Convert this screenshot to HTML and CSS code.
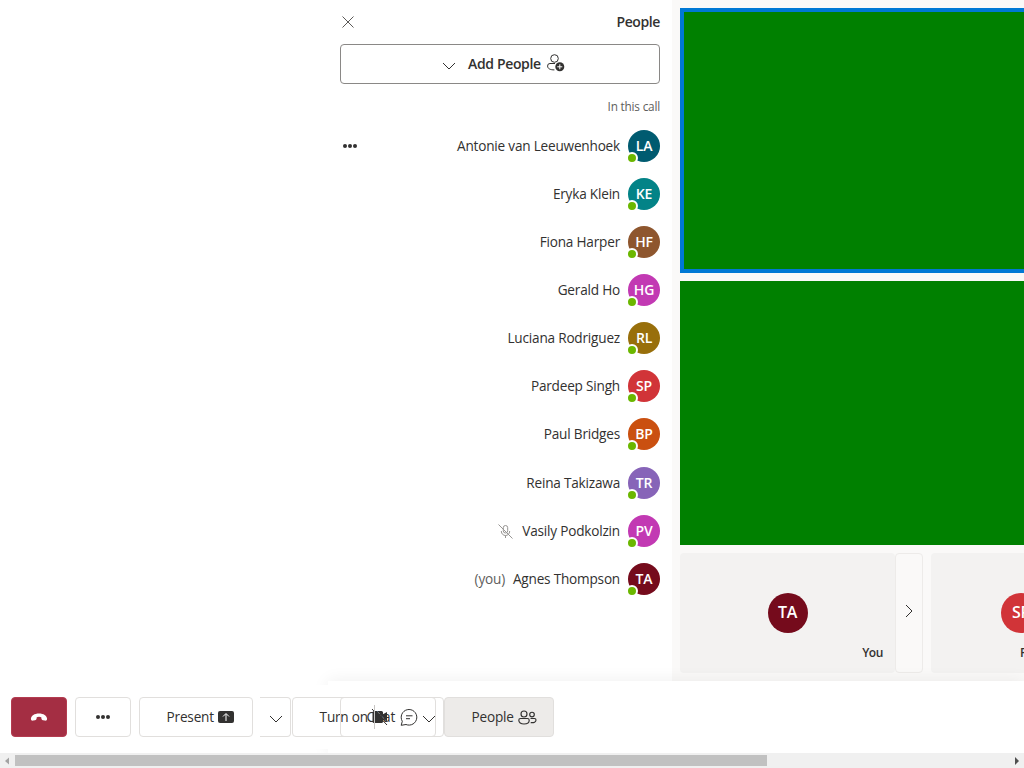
FILE: index.html
```
<!DOCTYPE html>
<html lang="en">
<head>
<meta charset="utf-8">
<title>Call with people pane</title>
<link rel="stylesheet" href="styles.css">
</head>
<body>
<svg class="defs" width="0" height="0">
  <symbol id="chevron" viewBox="0 0 14 8"><path d="M1 1l6 6 6-6" fill="none" stroke="currentColor"/></symbol>
</svg>
<div class="app">
  <main class="stage">
    <section class="pane">
      <header class="pane-head">
        <svg class="close" width="12" height="12" viewBox="0 0 12 12"><path d="M.5.5l11 11M11.5.5l-11 11" stroke="currentColor" stroke-width=".9"/></svg>
        <h2 class="pane-title">People</h2>
      </header>
      <button class="add">
        <svg class="chev" width="14" height="8"><use href="#chevron"/></svg>
        <span class="add-label">Add People</span>
        <svg class="add-icon" width="18" height="18" viewBox="0 0 18 18"><g fill="none" stroke="currentColor"><circle cx="7.5" cy="4.5" r="3.8"/><path d="M8 9.500H3A2.400 2.400 0 0 0 .6 12c0 2.700 2.600 3.900 6.800 3.900"/></g><circle cx="12.800" cy="12.800" r="4.500" fill="currentColor"/><path d="M12.800 10.300v5M10.300 12.800h5" stroke="#fff"/></svg>
      </button>
      <h3 class="sub">In this call</h3>
      <ul class="roster">
        <li class="person"><span class="dots"><i></i><i></i><i></i></span><span class="name">Antonie van Leeuwenhoek</span><span class="avatar c1">LA<i class="presence"></i></span></li>
        <li class="person"><span class="name">Eryka Klein</span><span class="avatar c2">KE<i class="presence"></i></span></li>
        <li class="person"><span class="name">Fiona Harper</span><span class="avatar c3">HF<i class="presence"></i></span></li>
        <li class="person"><span class="name">Gerald Ho</span><span class="avatar c4">HG<i class="presence"></i></span></li>
        <li class="person"><span class="name">Luciana Rodriguez</span><span class="avatar c5">RL<i class="presence"></i></span></li>
        <li class="person"><span class="name">Pardeep Singh</span><span class="avatar c6">SP<i class="presence"></i></span></li>
        <li class="person"><span class="name">Paul Bridges</span><span class="avatar c7">BP<i class="presence"></i></span></li>
        <li class="person lower"><span class="name">Reina Takizawa</span><span class="avatar c8">TR<i class="presence"></i></span></li>
        <li class="person"><svg class="muted" width="15" height="15" viewBox="0 0 15 15"><g fill="none" stroke="currentColor"><rect x="5.300" y="1.500" width="4.400" height="7.500" rx="2.200"/><path d="M3.300 7c0 6 8.400 6 8.400 0M7.500 11.500V14M.5.5l14 14"/></g></svg><span class="name">Vasily Podkolzin</span><span class="avatar c4">PV<i class="presence"></i></span></li>
        <li class="person"><span class="you">(you)</span><span class="name">Agnes Thompson</span><span class="avatar c10">TA<i class="presence"></i></span></li>
      </ul>
    </section>
    <section class="gallery">
      <div class="video speaking"></div>
      <div class="video"></div>
      <div class="strip">
        <div class="tile"><span class="coin c10">TA</span><span class="tile-name">You</span></div>
        <div class="next"><svg width="8" height="14" viewBox="0 0 8 14"><path d="M1 1l6 6-6 6" fill="none" stroke="currentColor"/></svg></div>
        <div class="tile second"><span class="coin c6">SP</span><span class="tile-name">Pardeep</span></div>
      </div>
    </section>
  </main>
  <footer class="bar">
    <div class="bar-left">
      <button class="btn hangup"><svg width="18" height="10" viewBox="0 0 18 10"><path d="M9 1.500c4.500 0 8 2.200 8.100 5.300 0 1.500-1 2.100-2.300 1.800l-1.800-.4c-1.100-.3-1.500-.8-1.600-1.700l-.1-1.300q-2.300-.8-4.600 0l-.1 1.300c-.1.900-.5 1.400-1.600 1.700l-1.800.4C1.900 8.900.9 8.300.9 6.800 1 3.700 4.500 1.500 9 1.500z" fill="#fff"/></svg></button>
      <button class="btn more"><span class="dots"><i></i><i></i><i></i></span></button>
      <button class="btn present"><span class="t-present">Present</span><svg width="16" height="12" viewBox="0 0 16 12"><rect width="16" height="12" rx="2" fill="currentColor"/><path d="M8 10V3M5 5.500l3-3 3 3" fill="none" stroke="#fff"/></svg></button>
      <button class="btn split"><svg width="14" height="8"><use href="#chevron"/></svg></button>
      <button class="btn camera"><span class="t-turn">Turn on</span><svg class="cam" width="18" height="18" viewBox="0 0 18 18"><path d="M3 3h7.500A1.500 1.500 0 0 1 12 4.500v9a1.500 1.500 0 0 1-1.500 1.500H3a1.500 1.500 0 0 1-1.500-1.500v-9A1.500 1.500 0 0 1 3 3zM11.500 6.500L16 4v10l-4.500-2.500z" fill="currentColor"/><path d="M1 1l15 16" stroke="currentColor"/><path d="M6 3l10 11" stroke="#fff" stroke-width=".4"/></svg></button>
      <button class="btn chat"><span class="t-chat">Chat</span><svg class="bubble" width="18" height="17" viewBox="0 0 18 17"><path d="M2.300 12.300A7.800 7.800 0 1 1 6 15.500L1.200 16.300zM6 6.800h6.500M6 9.700h4" fill="none" stroke="currentColor"/></svg><i class="divider"></i></button>
      <svg class="cam-chev" width="14" height="8"><use href="#chevron"/></svg>
      <button class="btn people"><span class="t-people">People</span><svg width="19" height="15" viewBox="0 0 19 15"><g fill="none" stroke="currentColor" stroke-width="1.150"><circle cx="6" cy="4" r="3"/><circle cx="14" cy="4.500" r="2.300"/><path d="M2.500 8.500h7c1 0 1.700.7 1.700 1.700 0 2.300-2 3.800-5.200 3.800S.8 12.500.8 10.200c0-1 .7-1.700 1.700-1.700zM12.500 8.500h4c1 0 1.500.6 1.500 1.500 0 2-2 3-5.300 2.600"/></g></svg></button>
    </div>
  </footer>
  <div class="scroll">
    <svg width="15" height="15"><path d="M9 4.500v7L5 8z" fill="#a3a3a3"/></svg>
    <div class="thumb"></div>
    <svg class="arrow-right" width="15" height="15"><path d="M6 4v8l4-4z" fill="#505050"/></svg>
  </div>
</div>
</body>
</html>
```
FILE: styles.css
```
* { box-sizing: border-box; }
body { margin: 0; overflow: hidden; background: #fff; color: #323130; font: 13.6px/20px "Open Sans", "Noto Sans", sans-serif; letter-spacing: -0.2px; }
h2, h3, ul { margin: 0; padding: 0; list-style: none; }
button { font: inherit; letter-spacing: inherit; color: inherit; padding: 0; background: none; }
svg { flex: none; display: block; }
.defs { position: absolute; }
.app { width: 1024px; height: 768px; overflow: hidden; display: flex; flex-direction: column; }
.stage { height: 681px; display: flex; padding-left: 328px; }

.pane { width: 344px; padding: 0 12px; flex: none; }
.pane-head { height: 44px; display: flex; align-items: center; justify-content: space-between; padding-left: 2px; }
.close { color: #484644; }
.pane-title { font-size: 14px; line-height: 20px; font-weight: 600; letter-spacing: -0.4px; }
.add { width: 320px; height: 40px; border: 1px solid #8a8886; border-radius: 4px; display: flex; align-items: center; padding-left: 101px; font-size: 14px; font-weight: 600; letter-spacing: -0.35px; }
.chev { margin-top: 4px; }
.add-label { margin-left: 12px; width: 74px; white-space: nowrap; text-align: left; }
.add-icon { margin: -3px 0 0 5px; }
.sub { height: 38px; padding-top: 12px; font-size: 11.8px; line-height: 20px; font-weight: 400; color: #605e5c; text-align: right; }
.person { height: 48px; display: flex; align-items: center; justify-content: flex-end; }
.lower { margin-top: 1px; }
.name { margin-right: 8px; white-space: nowrap; }
.you { color: #605e5c; margin-right: 8px; }
.muted { color: #979593; margin-right: 9px; }
.dots { display: flex; gap: 1px; }
.dots i { width: 4px; height: 4px; border-radius: 50%; background: #323130; }
.person .dots { margin: 0 auto 0 3px; }
.avatar { position: relative; width: 32px; height: 32px; border-radius: 50%; color: #fff; font-size: 14px; font-weight: 600; line-height: 32px; text-align: center; flex: none; }
.presence { position: absolute; left: -2px; bottom: -2px; width: 12px; height: 12px; border: 2px solid #fff; border-radius: 50%; background: #6bb700; }
.c1 { background: #005b70; } .c2 { background: #038387; } .c3 { background: #8e562e; } .c4 { background: #c239b3; }
.c5 { background: #986f0b; } .c6 { background: #d13438; } .c7 { background: #ca5010; } .c8 { background: #8764b8; } .c10 { background: #750b1c; }

.gallery { width: 352px; background: #faf9f8; padding: 8px 0 8px 8px; display: flex; flex-direction: column; gap: 8px; overflow: hidden; }
.video { height: 264.500px; background: green; flex: none; }
.speaking { border: solid #0078d4; border-width: 4px 0 4px 4px; }
.strip { display: flex; height: 120px; }
.tile { width: 215px; background: #f3f2f1; border-radius: 4px; display: flex; flex-direction: column; align-items: center; padding-top: 40px; flex: none; }
.coin { width: 40px; height: 40px; border-radius: 50%; color: #fff; font-size: 16px; line-height: 39px; font-weight: 600; text-align: center; }
.tile-name { align-self: flex-end; margin: 10px 12px 0 0; font-size: 12px; font-weight: 600; letter-spacing: -0.4px; }
.next { width: 28px; border: 1px solid #edebe9; border-radius: 4px; display: flex; align-items: center; justify-content: center; padding: 0 0 4px 0; flex: none; }
.second { margin-left: 8px; width: 180px; }
.second .tile-name { align-self: flex-start; margin-left: 89px; }

.bar { height: 72px; margin-left: 328px; background: #fff; box-shadow: 0 0 16px rgba(0,0,0,.07); z-index: 1; flex: none; }
.bar-left { width: 554px; height: 64px; margin: 4px 0 0 -328px; padding-left: 10.600px; display: flex; align-items: center; background: linear-gradient(#fff, #fff) 0 0 / 328px 100% no-repeat; }
.btn { height: 40px; border: 1px solid #e1dfdd; border-radius: 4px; display: flex; align-items: center; flex: none; white-space: nowrap; text-align: left; }
.hangup { width: 56px; background: #a42e43; border-color: #b43c50; justify-content: center; }
.more { width: 56px; margin-left: 8px; justify-content: center; }
.present { width: 114px; margin-left: 8px; padding-left: 27px; }
.t-present { width: 51px; }
.split { width: 31px; margin-left: 7px; border-left: 0; border-radius: 0 4px 4px 0; padding: 4px 0 0 9px; }
.camera { width: 152px; margin-left: 1px; padding-left: 27px; }
.t-turn { width: 46px; }
.cam { margin-left: 5px; }
.chat { width: 96px; margin-left: -104px; padding-left: 26px; position: relative; }
.t-chat { width: 30px; }
.bubble { margin-left: 3px; }
.divider { position: absolute; left: 33px; top: 7px; width: 1px; height: 24px; background: #c8c6c4; }
.cam-chev { margin: 4px 0 0 -14px; z-index: 1; }
.people { width: 110px; margin-left: 8px; padding-left: 27px; background: #edebe9; }
.t-people { width: 46px; }
.scroll { height: 15px; background: #f0f0f0; display: flex; align-items: center; z-index: 2; flex: none; }
.thumb { width: 752px; height: 11px; background: #c1c1c1; }
.arrow-right { margin-left: auto; }
```
